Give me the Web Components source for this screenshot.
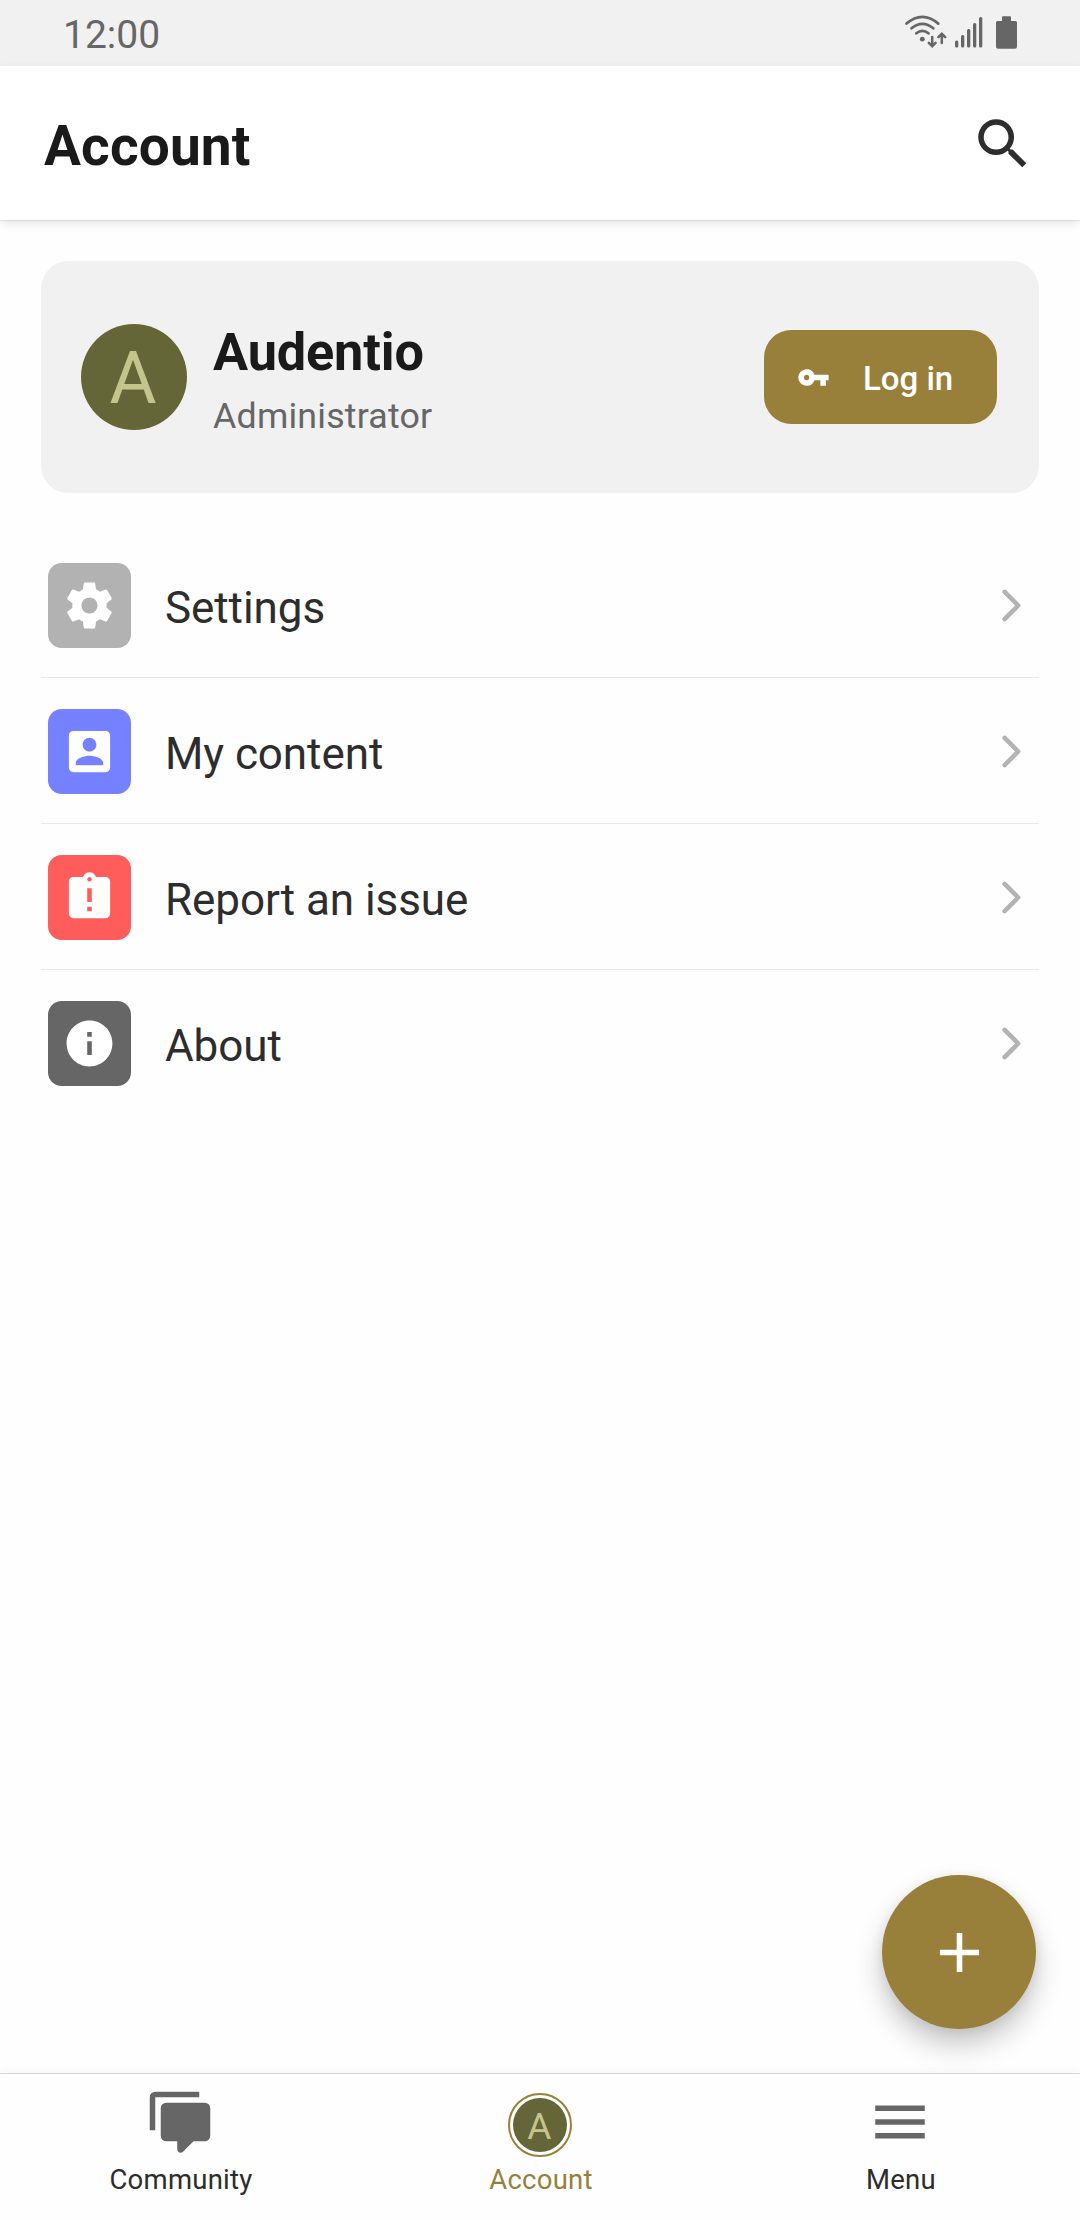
<!DOCTYPE html>
<html lang="en">
<head>
<meta charset="utf-8">
<title>Account</title>
<style>
  html, body {
    margin: 0;
    padding: 0;
  }
  body {
    width: 1080px;
    height: 2220px;
    overflow: hidden;
    background: #fefefe;
    color: #2d2d2d;
    font-family: Roboto, "Noto Sans", sans-serif;
  }
</style>
</head>
<body>
<account-screen></account-screen>

<script>
const icons = {
  search: '<path d="M15.5 14h-.79l-.28-.27A6.471 6.471 0 0 0 16 9.5 6.5 6.5 0 1 0 9.5 16c1.61 0 3.09-.59 4.23-1.57l.27.28v.79l5 4.99L20.49 19l-4.99-5zm-6 0C7.01 14 5 11.99 5 9.5S7.01 5 9.5 5 14 7.01 14 9.5 11.99 14 9.5 14z"/>',
  key: '<path d="M12.65 10A5.99 5.99 0 0 0 7 6c-3.31 0-6 2.69-6 6s2.69 6 6 6a5.99 5.99 0 0 0 5.65-4H17v4h4v-4h2v-4H12.65zM7 14c-1.1 0-2-.9-2-2s.9-2 2-2 2 .9 2 2-.9 2-2 2z"/>',
  settings: '<path d="M19.43 12.98c.04-.32.07-.64.07-.98s-.03-.66-.07-.98l2.11-1.65c.19-.15.24-.42.12-.64l-2-3.46c-.12-.22-.39-.3-.61-.22l-2.49 1c-.52-.4-1.08-.73-1.69-.98l-.38-2.65A.488.488 0 0 0 14 2h-4c-.25 0-.46.18-.49.42l-.38 2.65c-.61.25-1.17.59-1.69.98l-2.49-1c-.23-.09-.49 0-.61.22l-2 3.46c-.13.22-.07.49.12.64l2.11 1.65c-.04.32-.07.65-.07.98s.03.66.07.98l-2.11 1.65c-.19.15-.24.42-.12.64l2 3.46c.12.22.39.3.61.22l2.49-1c.52.4 1.08.73 1.69.98l.38 2.65c.03.24.24.42.49.42h4c.25 0 .46-.18.49-.42l.38-2.65c.61-.25 1.17-.59 1.69-.98l2.49 1c.23.09.49 0 .61-.22l2-3.46c.12-.22.07-.49-.12-.64l-2.11-1.65zM12 15.5c-1.93 0-3.5-1.57-3.5-3.5s1.57-3.5 3.5-3.5 3.5 1.57 3.5 3.5-1.57 3.5-3.5 3.5z"/>',
  person: '<path d="M3 5v14a2 2 0 0 0 2 2h14c1.1 0 2-.9 2-2V5c0-1.1-.9-2-2-2H5a2 2 0 0 0-2 2zm12 4c0 1.66-1.34 3-3 3s-3-1.34-3-3 1.34-3 3-3 3 1.34 3 3zm-9 8c0-2 4-3.1 6-3.1s6 1.1 6 3.1v1H6v-1z"/>',
  report: '<path d="M19 3h-4.18C14.4 1.84 13.3 1 12 1s-2.4.84-2.82 2H5c-1.1 0-2 .9-2 2v14c0 1.1.9 2 2 2h14c1.1 0 2-.9 2-2V5c0-1.1-.9-2-2-2zm-6 15h-2v-2h2v2zm0-4h-2V8h2v6zm-1-9c-.55 0-1-.45-1-1s.45-1 1-1 1 .45 1 1-.45 1-1 1z"/>',
  info: '<path d="M12 2C6.48 2 2 6.48 2 12s4.48 10 10 10 10-4.48 10-10S17.52 2 12 2zm1 15h-2v-6h2v6zm0-8h-2V7h2v2z"/>',
  chevron: '<path d="M9 6.1l5.9 5.9L9 17.9" fill="none" stroke="currentColor" stroke-width="2" stroke-linecap="round" stroke-linejoin="round"/>',
  plus: '<path d="M19 13h-6v6h-2v-6H5v-2h6V5h2v6h6z"/>',
  chat: '<path d="M1 15V3a2 2 0 0 1 2-2h16v2H3v12zM7 5h14a2 2 0 0 1 2 2v10a2 2 0 0 1-2 2h-4.100l-3.700 3.700c-.9.9-2.200.4-2.200-.8V19H7a2 2 0 0 1-2-2V7a2 2 0 0 1 2-2z"/>',
  menu: '<path d="M3 6h18v2H3zm0 5h18v2H3zm0 5h18v2H3z"/>',
};

function define(name, html, init) {
  const template = document.createElement('template');
  template.innerHTML = html;
  customElements.define(name, class extends HTMLElement {
    constructor() {
      super();
      this.attachShadow({ mode: 'open' });
      this.shadowRoot.appendChild(template.content.cloneNode(true));
    }

    connectedCallback() {
      if (init) init(this, this.shadowRoot);
    }
  });
}

define('app-icon', `
  <style>
    :host { display: block; flex: none; width: var(--size, 55px); height: var(--size, 55px); }
    svg { display: block; width: 100%; height: 100%; fill: currentColor; }
  </style>
  <svg viewBox="0 0 24 24"></svg>
`, (el, root) => {
  root.querySelector('svg').innerHTML = icons[el.getAttribute('name')];
});

define('user-avatar', `
  <style>
    :host {
      display: flex;
      flex: none;
      align-items: center;
      justify-content: center;
      box-sizing: border-box;
      width: 106px;
      height: 106px;
      padding: 4px 2px 0 0;
      border-radius: 50%;
      background: #646637;
      color: #c3c58c;
      font-size: 72px;
      line-height: 1;
    }
  </style>
  <slot></slot>
`);

define('status-bar', `
  <style>
    :host {
      display: flex;
      flex: none;
      align-items: center;
      justify-content: space-between;
      box-sizing: border-box;
      height: 66px;
      padding: 4px 60px 0 63px;
      background: #f1f1f1;
      color: #666;
      font-size: 39px;
      line-height: 46px;
    }
    svg { display: block; margin-top: -4px; }
  </style>
  <span><slot></slot></span>
  <svg width="120" height="66" viewBox="900 0 120 66" fill="#666">
    <g fill="none" stroke="#666" stroke-width="2.700" stroke-linecap="round">
      <path d="M906.500 23.600q15.800-13.600 31.800 0M911.500 28.300q10.900-9 21.800 0M916.300 33.300q6.100-4.800 12.200 0"/>
      <path d="M932.200 37v9M928.800 42.800l3.400 3.400 3.400-3.400M941.800 43v-9M938.400 37.200l3.400-3.400 3.400 3.400" stroke-width="2.500"/>
    </g>
    <circle cx="922.300" cy="39.200" r="2.400"/>
    <rect x="955" y="40.500" width="3.300" height="7" rx="1.500"/>
    <rect x="961" y="35" width="3.300" height="12.500" rx="1.500"/>
    <rect x="967" y="29" width="3.300" height="18.500" rx="1.500"/>
    <rect x="973" y="23" width="3.300" height="24.500" rx="1.500"/>
    <rect x="979" y="17" width="3.300" height="30.500" rx="1.500"/>
    <path d="M1003 16.300h7a1 1 0 0 1 1 1V21h4.500a1.500 1.500 0 0 1 1.500 1.500v24.300a2 2 0 0 1-2 2h-17a2 2 0 0 1-2-2V22.500a1.500 1.500 0 0 1 1.500-1.500h4.500v-3.700a1 1 0 0 1 1-1z"/>
  </svg>
`);

define('app-header', `
  <style>
    :host {
      display: flex;
      flex: none;
      align-items: center;
      justify-content: space-between;
      box-sizing: border-box;
      height: 154px;
      padding: 0 44px;
      background: #fff;
      box-shadow: 0 1px 1px rgba(0, 0, 0, .08), 0 4px 10px rgba(0, 0, 0, .09);
    }
    h1 {
      margin: 6px 0 0;
      color: #1a1a1a;
      font-size: 55px;
      font-weight: 700;
      letter-spacing: .15px;
      line-height: 64px;
    }
    app-icon { --size: 66px; margin-top: 2px; }
  </style>
  <h1><slot></slot></h1>
  <app-icon name="search"></app-icon>
`);

define('login-button', `
  <style>
    :host {
      display: flex;
      align-items: center;
      box-sizing: border-box;
      width: 233px;
      height: 94px;
      padding-left: 33px;
      border-radius: 27.500px;
      background: #98803a;
      color: #fff;
      font-size: 33px;
      font-weight: 500;
      line-height: 38px;
    }
    app-icon { --size: 33px; margin-right: 33px; }
    span { margin-top: 3px; }
  </style>
  <app-icon name="key"></app-icon>
  <span><slot></slot></span>
`);

define('profile-card', `
  <style>
    :host {
      display: flex;
      align-items: center;
      box-sizing: border-box;
      height: 232px;
      padding: 0 42px 0 40px;
      border-radius: 27.500px;
      background: #f1f1f1;
    }
    .who { flex: 1; margin: 13px 0 0 26px; }
    .name { color: #1a1a1a; font-size: 52.250px; font-weight: 700; letter-spacing: -.15px; line-height: 65px; }
    .role { color: #666; font-size: 35.750px; letter-spacing: .2px; line-height: 62px; }
  </style>
  <user-avatar>A</user-avatar>
  <div class="who">
    <div class="name"><slot name="name"></slot></div>
    <div class="role"><slot name="role"></slot></div>
  </div>
  <login-button>Log in</login-button>
`);

define('list-row', `
  <style>
    :host {
      display: flex;
      align-items: center;
      box-sizing: border-box;
      height: 146px;
      padding: 0 0 0 7px;
      border-bottom: 1px solid #e9e9e9;
      font-size: 44px;
      letter-spacing: -.08px;
      line-height: 52px;
    }
    :host(:last-child) { border-bottom-color: transparent; }
    .tile {
      display: flex;
      align-items: center;
      justify-content: center;
      width: 83px;
      height: 85px;
      margin-top: 1px;
      border-radius: 13.750px;
      background: var(--tile);
      color: #fff;
    }
    span { flex: 1; margin: 7px 0 0 34px; }
    .arrow { color: #b3b3b3; margin-top: 1px; }
  </style>
  <div class="tile"><app-icon></app-icon></div>
  <span><slot></slot></span>
  <app-icon class="arrow" name="chevron"></app-icon>
`, (el, root) => {
  const icon = document.createElement('app-icon');
  icon.setAttribute('name', el.getAttribute('icon'));
  root.querySelector('.tile').replaceChildren(icon);
});

define('fab-button', `
  <style>
    :host {
      position: absolute;
      right: 44px;
      bottom: 44px;
      display: flex;
      align-items: center;
      justify-content: center;
      width: 154px;
      height: 154px;
      border-radius: 50%;
      background: #98803a;
      color: #fff;
      box-shadow: 0 16px 28px rgba(0, 0, 0, .22), 0 2px 12px rgba(0, 0, 0, .08);
    }
    app-icon { --size: 67px; }
  </style>
  <app-icon name="plus"></app-icon>
`);

define('tab-item', `
  <style>
    :host {
      display: flex;
      flex: 1;
      flex-direction: column;
      align-items: center;
      font-size: 27.500px;
      letter-spacing: .25px;
      line-height: 33px;
    }
    :host([active]) { color: #98803a; }
    .pic {
      display: flex;
      align-items: center;
      justify-content: center;
      height: 66px;
      margin: 17px 0 6px;
      color: #666;
    }
    .label { padding-left: 2px; }
  </style>
  <div class="pic"><slot name="icon"></slot></div>
  <div class="label"><slot></slot></div>
`);

define('tab-bar', `
  <style>
    :host {
      position: relative;
      display: flex;
      flex: none;
      box-sizing: border-box;
      height: 147px;
      border-top: 1px solid #d6d6d6;
      background: #fefefe;
      box-shadow: 0 0 12px rgba(0, 0, 0, .05);
    }
    app-icon { --size: 66px; margin-bottom: 4px; }
    .ring {
      display: block;
      margin-top: 1px;
      padding: 3px;
      border: 2px solid #98803a;
      border-radius: 50%;
    }
    .ring user-avatar { width: 54px; height: 54px; padding: 3px 1px 0 0; font-size: 37px; }
  </style>
  <tab-item><app-icon slot="icon" name="chat"></app-icon>Community</tab-item>
  <tab-item active><div slot="icon" class="ring"><user-avatar>A</user-avatar></div>Account</tab-item>
  <tab-item><app-icon slot="icon" name="menu"></app-icon>Menu</tab-item>
`);

define('account-screen', `
  <style>
    :host { display: flex; flex-direction: column; height: 2220px; }
    main { position: relative; flex: 1; padding: 41px 41px 0; }
    .list { margin-top: 39px; }
  </style>
  <status-bar>12:00</status-bar>
  <app-header>Account</app-header>
  <main>
    <profile-card>
      <span slot="name">Audentio</span>
      <span slot="role">Administrator</span>
    </profile-card>
    <div class="list">
      <list-row icon="settings" style="--tile: #b2b2b2">Settings</list-row>
      <list-row icon="person" style="--tile: #7681ff">My content</list-row>
      <list-row icon="report" style="--tile: #ff5c5c">Report an issue</list-row>
      <list-row icon="info" style="--tile: #666">About</list-row>
    </div>
    <fab-button></fab-button>
  </main>
  <tab-bar></tab-bar>
`);
</script>
</body>
</html>
